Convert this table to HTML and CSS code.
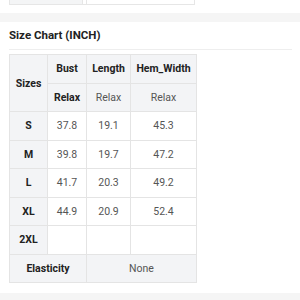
FILE: index.html
```html
<!DOCTYPE html>
<html lang="en">
<head>
    <meta charset="UTF-8">
    <meta name="viewport" content="width=device-width, initial-scale=1.0">
    <title>Size Chart</title>
    <link rel="stylesheet" href="styles.css">
</head>
<body>
    <!-- 上一个表格的尾部 -->
    <div class="prev-table">
        <div class="prev-cell prev-label"></div>
        <div class="prev-cell prev-gap"></div>
        <div class="prev-cell prev-value"></div>
    </div>

    <div class="divider"></div>

    <!-- 尺码表 -->
    <div class="size-section">
        <h2 class="section-title">Size Chart (INCH)</h2>
        <table class="size-table">
            <colgroup>
                <col class="col-size">
                <col class="col-bust">
                <col class="col-length">
                <col class="col-hem">
            </colgroup>
            <tr class="head">
                <th rowspan="2">Sizes</th>
                <th>Bust</th>
                <th>Length</th>
                <th>Hem_Width</th>
            </tr>
            <tr class="head">
                <th>Relax</th>
                <td>Relax</td>
                <td>Relax</td>
            </tr>
            <tr>
                <th>S</th>
                <td>37.8</td>
                <td>19.1</td>
                <td>45.3</td>
            </tr>
            <tr>
                <th>M</th>
                <td>39.8</td>
                <td>19.7</td>
                <td>47.2</td>
            </tr>
            <tr>
                <th>L</th>
                <td>41.7</td>
                <td>20.3</td>
                <td>49.2</td>
            </tr>
            <tr>
                <th>XL</th>
                <td>44.9</td>
                <td>20.9</td>
                <td>52.4</td>
            </tr>
            <tr>
                <th>2XL</th>
                <td></td>
                <td></td>
                <td></td>
            </tr>
            <tr class="head">
                <th colspan="2">Elasticity</th>
                <td colspan="2">None</td>
            </tr>
        </table>
    </div>

    <div class="divider bottom"></div>
</body>
</html>
```

FILE: styles.css
```css
/* 全局样式 */
body {
    font-family: Roboto, 'Liberation Sans', sans-serif;
    margin: 0;
    background-color: #fff;
    color: #222;
}

/* 上一个表格尾部 */
.prev-table {
    display: flex;
    margin-left: 9px;
    width: 186px;
    height: 5px;
}
.prev-cell {
    border-left: 1px solid #e6e6e6;
    border-bottom: 1px solid #e6e6e6;
}
.prev-label {
    width: 72px;
    background-color: #f4f5f6;
}
.prev-gap {
    width: 3px;
}
.prev-value {
    flex: 1;
    border-right: 1px solid #e6e6e6;
}

/* 灰色分隔条 */
.divider {
    height: 9px;
    margin-top: 8px;
    background-color: #f5f5f5;
}
.divider.bottom {
    margin-top: 10px;
}

/* 标题 */
.size-section {
    padding: 0 8px 0 9px;
}
.section-title {
    margin: 0;
    height: 27px;
    line-height: 27px;
    font-size: 11.5px;
    font-weight: 700;
    color: #222;
    border-bottom: 1px solid #eee;
}

/* 尺码表 */
.size-table {
    margin-top: 4px;
    border-collapse: collapse;
    width: 187px;
    font-size: 10.5px;
    table-layout: fixed;
}
.col-size { width: 38px; }
.col-bust { width: 39px; }
.col-length { width: 44px; }
.col-hem { width: 66px; }

.size-table th,
.size-table td {
    border: 1px solid #e4e4e4;
    height: 27.5px;
    padding: 0;
    text-align: center;
}
.size-table th {
    font-weight: 700;
    color: #222;
    background-color: #f3f4f6;
}
.size-table td {
    color: #555;
    background-color: #fff;
}
.size-table .head td {
    background-color: #f3f4f6;
}
```
